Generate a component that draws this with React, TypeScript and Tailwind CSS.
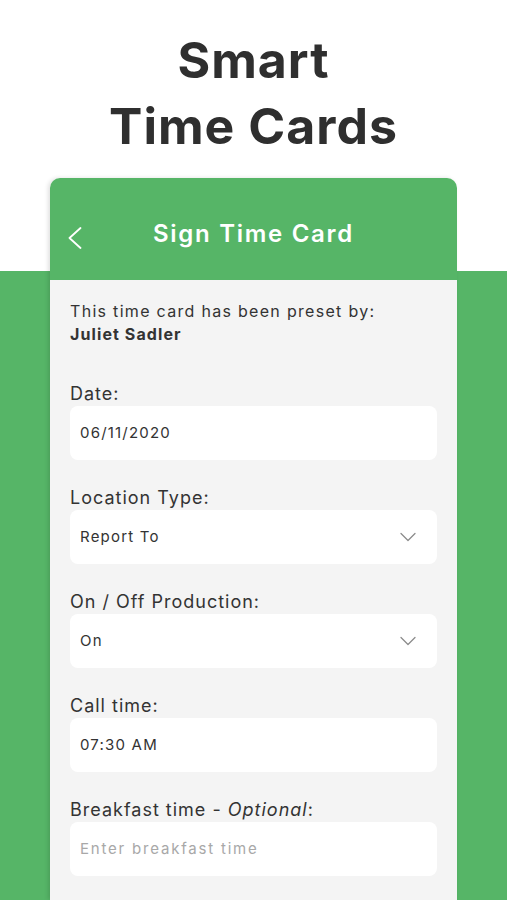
const fields = [
  { label: 'Date:', value: '06/11/2020' },
  { label: 'Location Type:', value: 'Report To', select: true },
  { label: 'On / Off Production:', value: 'On', select: true },
  { label: 'Call time:', value: '07:30 AM' },
  { label: 'Breakfast time - ', optional: true, placeholder: 'Enter breakfast time' },
]

export default function App() {
  return (
    <div
      className="h-[900px] w-full overflow-hidden bg-[linear-gradient(to_bottom,#ffffff_271px,#56b567_271px)] text-[#333333]"
      style={{ fontFamily: 'Inter, "Noto Sans", sans-serif' }}
    >
      {/* Headline */}
      <h1 className="pt-[27px] text-center text-[50px] font-bold leading-[66px] tracking-[1px] text-[#2f2f2f]">
        Smart
        <br />
        Time Cards
      </h1>

      {/* Card */}
      <div className="mx-[50px] mt-[19px] w-[407px] overflow-hidden rounded-t-[10px] shadow-[-2px_0_4px_rgba(0,0,0,0.12)]">
        <header className="relative flex h-[102px] items-center justify-center bg-[#56b567] pt-[10px]">
          <svg
            className="absolute left-[18px] top-[49px]"
            width="14"
            height="22"
            viewBox="0 0 14 22"
            fill="none"
            stroke="white"
            strokeWidth="1.8"
            strokeLinecap="round"
            strokeLinejoin="round"
          >
            <polyline points="12.5,1 1.5,11 12.5,21" />
          </svg>
          <span className="text-[24px] font-semibold tracking-[1.7px] text-white">Sign Time Card</span>
        </header>

        <div className="h-[620px] bg-[#f4f4f4] px-[20px] pt-[20px]">
          <p className="text-[16px] leading-[23px] tracking-[1.3px] text-[#333333]">
            This time card has been preset by:
          </p>
          <p className="text-[16px] font-bold leading-[23px] tracking-[1.1px] text-[#333333]">
            Juliet Sadler
          </p>

          <div className="mt-[36px] flex flex-col gap-[26px]">
            {fields.map((f) => (
              <div key={f.label} className="flex flex-col">
                <span className="text-[18px] leading-[24px] tracking-[1px] text-[#333333]">
                  {f.label}
                  {f.optional && (
                    <>
                      <i>Optional</i>:
                    </>
                  )}
                </span>
                <div className="flex h-[54px] items-center justify-between rounded-[8px] bg-white pl-[10px] pr-[21px]">
                  {f.value ? (
                    <span className="text-[15px] tracking-[1.2px] text-[#333333]">{f.value}</span>
                  ) : (
                    <span className="text-[15px] tracking-[1.8px] text-[#a8a8a8]">{f.placeholder}</span>
                  )}
                  {f.select && (
                    <svg
                      width="16"
                      height="10"
                      viewBox="0 0 16 10"
                      fill="none"
                      stroke="#8c8c8c"
                      strokeWidth="1.3"
                      strokeLinecap="round"
                      strokeLinejoin="round"
                    >
                      <polyline points="1,1.5 8,8.5 15,1.5" />
                    </svg>
                  )}
                </div>
              </div>
            ))}
          </div>
        </div>
      </div>
    </div>
  )
}
